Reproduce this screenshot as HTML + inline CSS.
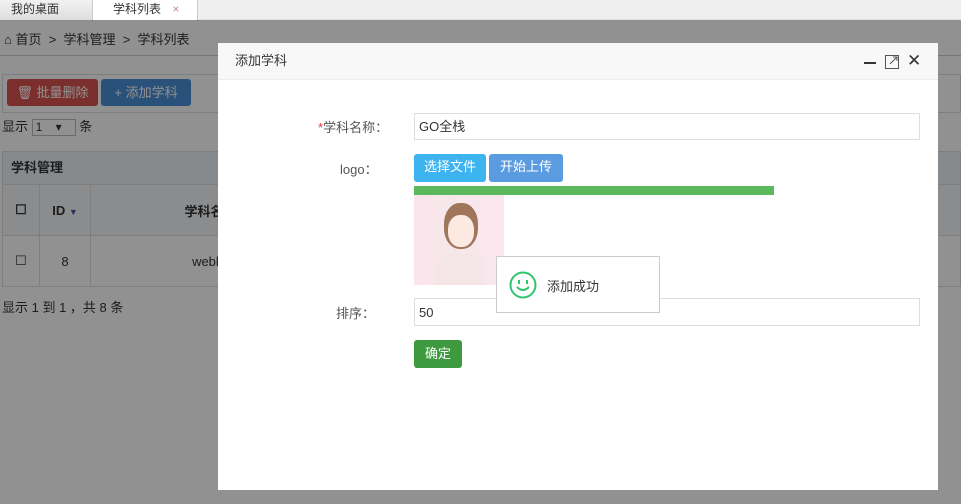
<!DOCTYPE html>
<html><head><meta charset="utf-8"><style>
*{margin:0;padding:0;box-sizing:border-box}
body{width:961px;height:504px;overflow:hidden;position:relative;background:#fff;font-family:"Liberation Sans","Noto Sans CJK SC",sans-serif;font-size:13px;color:#333}
.abs{position:absolute}
.tabs{left:0;top:0;width:961px;height:20px;background:#efefef;border-bottom:1px solid #ddd}
.ov{left:0;top:20px;width:961px;height:484px;background:rgba(0,0,0,0.43)}
.btn{position:absolute;color:#fff;border-radius:3px;font-size:13px;text-align:center}
td{border:1px solid #ddd;text-align:center}
</style></head><body>
<div class="abs tabs">
 <div class="abs" style="left:0;top:0;width:92px;height:20px;background:linear-gradient(#f2f2f2,#ddd);font-size:12px;line-height:18px;padding-left:11px">我的桌面</div>
 <div class="abs" style="left:92px;top:0;width:106px;height:21px;background:#fff;border-left:1px solid #ccc;border-right:1px solid #ccc;font-size:12px;line-height:18px;padding-left:20px">学科列表 <span style="color:#c88;margin-left:8px">×</span></div>
</div>
<div class="abs" style="left:4px;top:29px;font-size:13px">⌂ 首页 &nbsp;&gt;&nbsp; 学科管理 &nbsp;&gt;&nbsp; 学科列表</div>
<div class="abs" style="left:0;top:55px;width:961px;border-top:1px solid #ccc"></div>
<div class="abs" style="left:2px;top:74px;width:959px;height:39px;border:1px solid #ddd;background:#fff"></div>
<div class="btn" style="left:7px;top:79px;width:91px;height:27px;line-height:27px;background:#d9534f">🗑 批量删除</div>
<div class="btn" style="left:101px;top:79px;width:90px;height:27px;line-height:27px;background:#4a8fd6">+ 添加学科</div>
<div class="abs" style="left:2px;top:116px">显示 <span style="display:inline-block;width:44px;height:17px;border:1px solid #bbb;font-size:12px;padding-left:3px">1 &nbsp;&nbsp;&nbsp;▾</span> 条</div>
<div class="abs" style="left:2px;top:151px;width:959px;height:34px;background:#eef3f8;border:1px solid #ddd;font-weight:bold;line-height:32px;padding-left:8px">学科管理</div>
<table class="abs" style="left:2px;top:184px;width:959px;border-collapse:collapse">
<tr style="height:51px;background:#f3f6fa;font-weight:bold"><td style="width:37px">☐</td><td style="width:51px">ID <span style="color:#55a;font-size:9px">▼</span></td><td style="width:240px">学科名称</td><td></td></tr>
<tr style="height:51px;background:#fff"><td>☐</td><td>8</td><td>webkz</td><td></td></tr>
</table>
<div class="abs" style="left:2px;top:297px">显示 1 到 1 ，共 8 条</div>
<div class="abs ov"></div>

<div class="abs" style="left:218px;top:43px;width:720px;height:447px;background:#fff">
 <div style="height:37px;background:#f8f8f8;border-bottom:1px solid #eee;line-height:36px;padding-left:17px;font-size:13px">添加学科
  <span class="abs" style="left:646px;top:19px;width:12px;height:2px;background:#333"></span>
  <svg class="abs" style="left:667px;top:12px" width="14" height="14" viewBox="0 0 14 14"><rect x="0.5" y="0.5" width="13" height="13" fill="none" stroke="#555"/><path d="M5 9 L12 2 M8 2 H12 V6" fill="none" stroke="#555"/></svg>
  <span class="abs" style="left:689px;top:0;font-size:17px;color:#333">✕</span>
 </div>
 <div class="abs" style="left:100px;top:74px;font-size:13px;color:#555"><span style="color:#e33">*</span>学科名称：</div>
 <div class="abs" style="left:196px;top:70px;width:506px;height:27px;border:1px solid #ddd;line-height:25px;padding-left:4px;font-size:13px">GO全栈</div>
 <div class="abs" style="left:122px;top:116px;color:#555">logo：</div>
 <div class="btn" style="left:196px;top:111px;width:72px;height:28px;line-height:26px;background:#3db4f0">选择文件</div>
 <div class="btn" style="left:271px;top:111px;width:74px;height:28px;line-height:26px;background:#5b9be0">开始上传</div>
 <div class="abs" style="left:196px;top:143px;width:360px;height:9px;background:#5cb85c"></div>
 <div class="abs" style="left:196px;top:152px;width:90px;height:90px;background:linear-gradient(90deg,#fbe4ec,#f6e8ea 40%,#fbe6ee)">
  <div class="abs" style="left:30px;top:8px;width:34px;height:46px;border-radius:45%;background:#a0765a"></div>
  <div class="abs" style="left:34px;top:20px;width:26px;height:32px;border-radius:45%;background:#fbe9e2"></div>
  <div class="abs" style="left:22px;top:58px;width:48px;height:32px;border-radius:40% 40% 0 0;background:#f4e6e6"></div>
 </div>
 <div class="abs" style="left:118px;top:260px;color:#555">排序：</div>
 <div class="abs" style="left:196px;top:255px;width:506px;height:28px;border:1px solid #ddd;line-height:27px;padding-left:4px">50</div>
 <div class="btn" style="left:196px;top:297px;width:48px;height:28px;line-height:28px;background:#3e9a3e">确定</div>
 <div class="abs" style="left:278px;top:213px;width:164px;height:57px;background:#fff;border:1px solid #ccc">
  <svg class="abs" style="left:12px;top:14px" width="28" height="28" viewBox="0 0 28 28"><circle cx="14" cy="14" r="12.5" fill="none" stroke="#2fc56e" stroke-width="2"/><rect x="9" y="9" width="2" height="4" fill="#2fc56e"/><rect x="17" y="9" width="2" height="4" fill="#2fc56e"/><path d="M8 16 Q14 22 20 16" fill="none" stroke="#2fc56e" stroke-width="2"/></svg>
  <div class="abs" style="left:50px;top:19px;font-size:13px">添加成功</div>
 </div>
</div>
</body></html>
